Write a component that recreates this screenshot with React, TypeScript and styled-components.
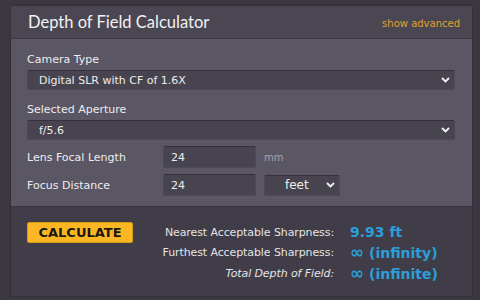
import { useState } from 'react';
import styled, { createGlobalStyle } from 'styled-components';

const GlobalStyle = createGlobalStyle`
    body {
        margin: 0;
        background: #3b3841;
        font-family: "DejaVu Sans", Verdana, sans-serif;
    }
`;

const Page = styled.div`
    padding: 6px 8px 4px 11px;
    height: 300px;
    box-sizing: border-box;
`;

const Panel = styled.div`
    width: 461px;
    height: 290px;
    display: flex;
    flex-direction: column;
    box-shadow: 0 0 2px rgba(0, 0, 0, 0.35);
`;

const Header = styled.div`
    height: 32px;
    display: flex;
    justify-content: space-between;
    align-items: center;
    padding: 0 12px 0 17px;
    background: #4a4753;
    border-bottom: 1px solid #3c3944;
`;

const Title = styled.h1`
    margin: 0;
    font-family: Lato, "Open Sans", sans-serif;
    font-weight: 400;
    font-size: 16.5px;
    color: #f2f2f2;
`;

const AdvancedLink = styled.a`
    font-size: 10px;
    color: #e0a02e;
    cursor: pointer;
    margin-top: 2px;
`;

const Body = styled.div`
    background: #5a5664;
    padding: 14px 17px 10px 16px;
    display: flex;
    flex-direction: column;
`;

const FieldLabel = styled.div`
    font-size: 11px;
    line-height: 13px;
    color: #ededed;
    margin-bottom: 4px;
`;

const SelectWrap = styled.div<{ width?: number; gap?: number }>`
    position: relative;
    width: ${props => props.width ? props.width + 'px' : '100%'};
    margin-bottom: ${props => props.gap ?? 0}px;
`;

const Select = styled.select<{ indent?: number; tall?: boolean }>`
    appearance: none;
    display: block;
    width: 100%;
    height: ${props => props.tall ? 21 : 20}px;
    box-sizing: border-box;
    background: #48444f;
    border: 1px solid #4d4956;
    border-top-color: #34313a;
    border-radius: 2px;
    color: #ececec;
    font-family: "DejaVu Sans", Verdana, sans-serif;
    font-size: ${props => props.tall ? 12 : 11}px;
    padding: 0 0 0 ${props => props.indent ?? 11}px;
    outline: none;
`;

const Chevron = styled.svg`
    position: absolute;
    right: 5px;
    top: 50%;
    margin-top: -3px;
    pointer-events: none;
`;

const Row = styled.div`
    display: grid;
    grid-template-columns: 128px 93px auto;
    column-gap: 8px;
    align-items: center;
    margin-bottom: 6px;
    &:last-child {
        margin-bottom: 0;
    }
`;

const RowLabel = styled.div`
    font-size: 11px;
    color: #ededed;
`;

const NumberInput = styled.input`
    display: block;
    width: 93px;
    height: 22px;
    box-sizing: border-box;
    background: #48444f;
    border: 1px solid #4d4956;
    border-top-color: #34313a;
    border-radius: 2px;
    color: #ececec;
    font-family: "DejaVu Sans", Verdana, sans-serif;
    font-size: 11px;
    padding: 0 7px;
    outline: none;
`;

const Unit = styled.span`
    font-size: 10px;
    color: #a8a5af;
`;

const Footer = styled.div`
    flex: 1;
    background: #403d48;
    border-top: 1px solid #37343e;
    padding: 15px 16px 0 16px;
    display: flex;
    align-items: flex-start;
`;

const CalcButton = styled.button`
    width: 106px;
    height: 21px;
    flex-shrink: 0;
    background: #fbb723;
    border: 1px solid #d49a1a;
    border-radius: 2px;
    color: #1b1712;
    font-family: "DejaVu Sans", Verdana, sans-serif;
    font-weight: 700;
    font-size: 13px;
    padding: 0;
    cursor: pointer;
`;

const Results = styled.div`
    display: grid;
    grid-template-columns: 201px auto;
    column-gap: 16px;
    grid-auto-rows: 20.5px;
    align-items: center;
`;

const ResultLabel = styled.div<{ italic?: boolean }>`
    text-align: right;
    font-size: 11px;
    letter-spacing: -0.1px;
    color: #e4e4e4;
    font-style: ${props => props.italic ? 'italic' : 'normal'};
`;

const ResultValue = styled.div`
    font-size: 14px;
    font-weight: 700;
    color: #2b9fd9;
`;

const Infinity = styled.span`
    font-size: 17px;
    line-height: 1;
`;

const ChevronIcon = () => (
    <Chevron width="9" height="6" viewBox="0 0 9 6">
        <polyline points="1,1 4.5,4.5 8,1" fill="none" stroke="#f0f0f0" strokeWidth="1.8" />
    </Chevron>
);

const App = () => {
    const [camera, setCamera] = useState('dslr16');
    const [aperture, setAperture] = useState('5.6');
    const [focal, setFocal] = useState('24');
    const [distance, setDistance] = useState('24');
    const [unit, setUnit] = useState('feet');

    return (
        <Page>
            <GlobalStyle />
            <Panel>
                <Header>
                    <Title>Depth of Field Calculator</Title>
                    <AdvancedLink>show advanced</AdvancedLink>
                </Header>
                <Body>
                    <FieldLabel>Camera Type</FieldLabel>
                    <SelectWrap gap={13}>
                        <Select value={camera} onChange={e => setCamera(e.target.value)}>
                            <option value="dslr16">Digital SLR with CF of 1.6X</option>
                            <option value="dslr15">Digital SLR with CF of 1.5X</option>
                            <option value="ff">Full Frame 35mm</option>
                        </Select>
                        <ChevronIcon />
                    </SelectWrap>
                    <FieldLabel>Selected Aperture</FieldLabel>
                    <SelectWrap gap={6}>
                        <Select value={aperture} onChange={e => setAperture(e.target.value)}>
                            <option value="2.8">f/2.8</option>
                            <option value="4">f/4</option>
                            <option value="5.6">f/5.6</option>
                            <option value="8">f/8</option>
                        </Select>
                        <ChevronIcon />
                    </SelectWrap>
                    <Row>
                        <RowLabel>Lens Focal Length</RowLabel>
                        <NumberInput value={focal} onChange={e => setFocal(e.target.value)} />
                        <Unit>mm</Unit>
                    </Row>
                    <Row>
                        <RowLabel>Focus Distance</RowLabel>
                        <NumberInput value={distance} onChange={e => setDistance(e.target.value)} />
                        <SelectWrap width={76}>
                            <Select tall indent={20} value={unit} onChange={e => setUnit(e.target.value)}>
                                <option value="feet">feet</option>
                                <option value="meters">meters</option>
                            </Select>
                            <ChevronIcon />
                        </SelectWrap>
                    </Row>
                </Body>
                <Footer>
                    <CalcButton>CALCULATE</CalcButton>
                    <Results>
                        <ResultLabel>Nearest Acceptable Sharpness:</ResultLabel>
                        <ResultValue>9.93 ft</ResultValue>
                        <ResultLabel>Furthest Acceptable Sharpness:</ResultLabel>
                        <ResultValue><Infinity>∞</Infinity> (infinity)</ResultValue>
                        <ResultLabel italic>Total Depth of Field:</ResultLabel>
                        <ResultValue><Infinity>∞</Infinity> (infinite)</ResultValue>
                    </Results>
                </Footer>
            </Panel>
        </Page>
    );
};

export default App;
